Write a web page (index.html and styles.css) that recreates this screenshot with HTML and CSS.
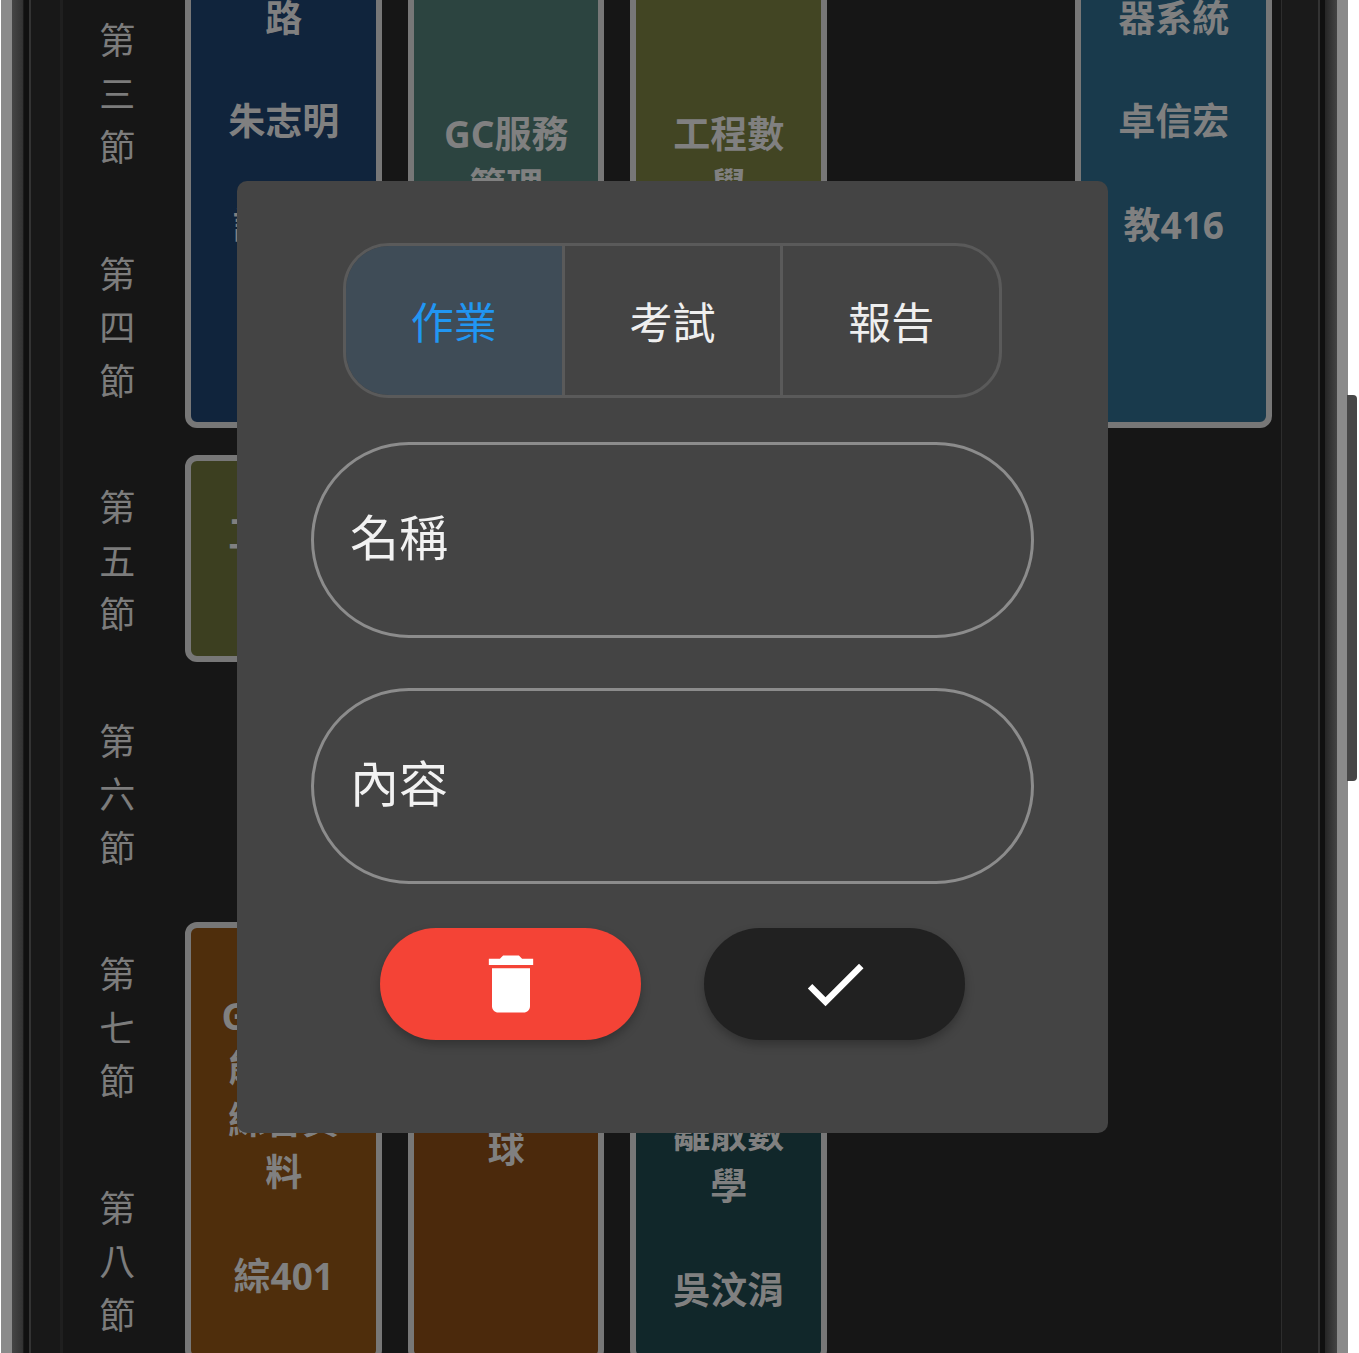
FILE: index.html
```html
<!DOCTYPE html>
<html lang="zh-Hant">
<head>
<meta charset="utf-8">
<title>課表</title>
<link rel="stylesheet" href="styles.css">
</head>
<body>
<div class="device">
  <div class="rim"></div>
  <div class="bezel bezel-left"></div>
  <div class="screen">
    <div class="gutter"></div>
    <div class="timetable">
      <div class="period p2"><span>第</span><span>二</span><span>節</span></div>
      <div class="period p3"><span>第</span><span>三</span><span>節</span></div>
      <div class="period p4"><span>第</span><span>四</span><span>節</span></div>
      <div class="period p5"><span>第</span><span>五</span><span>節</span></div>
      <div class="period p6"><span>第</span><span>六</span><span>節</span></div>
      <div class="period p7"><span>第</span><span>七</span><span>節</span></div>
      <div class="period p8"><span>第</span><span>八</span><span>節</span></div>

      <div class="card c1 span-top navy pad-top-two">
        <p>電腦網路</p><p>朱志明</p><p>誠301</p>
      </div>
      <div class="card c1 span-mid olive pad-mid">
        <p>工程數學</p><p>吳汶涓</p>
      </div>
      <div class="card c1 span-low amber pad-low-a">
        <p>GC服務能源與綜合資料</p><p>綜401</p>
      </div>
      <div class="card c2 span-top sage pad-top-low">
        <p>GC服務管理</p><p>朱志明</p><p>綜401</p>
      </div>
      <div class="card c2 span-low rust pad-low-b">
        <p>體育羽球</p>
      </div>
      <div class="card c3 span-top moss pad-top-low">
        <p>工程數學</p><p>吳汶涓</p><p>綜401</p>
      </div>
      <div class="card c3 span-low pine pad-low-c">
        <p>離散數學</p><p>吳汶涓</p>
      </div>
      <div class="card c5 span-top teal pad-top-two">
        <p>微處理器系統</p><p>卓信宏</p><p>教416</p>
      </div>
    </div>
    <div class="gutter-right"></div>
  </div>
  <div class="bezel bezel-right"></div>
  <div class="rim"></div>
  <div class="side-button"></div>
</div>

<div class="dialog">
  <div class="tabs">
    <div class="tab tab-active">作業</div>
    <div class="tab">考試</div>
    <div class="tab">報告</div>
  </div>
  <div class="field field-first"><span>名稱</span></div>
  <div class="field field-second"><span>內容</span></div>
  <div class="actions">
    <button class="action action-delete" type="button" aria-label="刪除">
      <svg class="icon" viewBox="0 0 24 24"><path d="M6 19c0 1.1.9 2 2 2h8c1.1 0 2-.9 2-2V7H6v12zM19 4h-3.5l-1-1h-5l-1 1H5v2h14V4z"/></svg>
    </button>
    <button class="action action-confirm" type="button" aria-label="確認">
      <svg class="icon" viewBox="0 0 24 24"><path d="M9 16.17L4.83 12l-1.41 1.41L9 19 21 7l-1.41-1.41z"/></svg>
    </button>
  </div>
</div>
</body>
</html>
```

FILE: styles.css
```css
* { box-sizing: border-box; }

html, body {
  margin: 0;
  height: 1353px;
  overflow: hidden;
  background: #fff;
}

body {
  font-family: "Noto Sans", "Noto Sans CJK TC", sans-serif;
  position: relative;
}

.device {
  display: flex;
  width: 1347px;
  height: 1353px;
  margin-left: 1px;
  position: relative;
}

.rim {
  width: 11px;
  flex: none;
  background: #8a8a8a;
}

.bezel { width: 19px; flex: none; }

.bezel-left {
  background: linear-gradient(90deg, #454545 0, #333 55%, #101010 63%, #101010 89%, #333 89%);
}

.bezel-right {
  width: 19px;
  background: linear-gradient(90deg, #333 0, #333 10%, #101010 10%, #101010 35%, #262626 38%, #444 100%);
}

.screen {
  flex: 1;
  min-width: 0;
  display: flex;
  background: #161616;
  overflow: hidden;
}

.gutter {
  width: 32px;
  flex: none;
  background: linear-gradient(90deg, #181818 0, #181818 29px, #1f1f1f 29px, #1f1f1f 32px);
}

.gutter-right {
  flex: 1;
  margin-left: -3px;
  position: relative;
  background: linear-gradient(90deg, #2d2d2d 0, #2d2d2d 1px, #1a1a1a 1px);
}

.timetable {
  flex: none;
  display: grid;
  grid-template-columns: 108.5px repeat(5, 222.5px);
  grid-template-rows: repeat(7, 233.5px);
  margin-top: -259px;
  height: 1634.5px;
}

.period {
  grid-column: 1;
  display: flex;
  flex-direction: column;
  align-items: center;
  justify-content: center;
  padding-top: 2px;
  color: #7c7c7c;
  font-family: "Noto Sans CJK TC", sans-serif;
  font-size: 36px;
  line-height: 53.5px;
}

.p2 { grid-row: 1; }
.p3 { grid-row: 2; }
.p4 { grid-row: 3; }
.p5 { grid-row: 4; }
.p6 { grid-row: 5; }
.p7 { grid-row: 6; }
.p8 { grid-row: 7; }

.card {
  margin: 13.5px 12.5px 13.5px 13.5px;
  padding-left: 25px;
  padding-right: 24px;
  border: 6px solid #777;
  border-radius: 12px;
  display: flex;
  flex-direction: column;
  gap: 51.5px;
  overflow: hidden;
  color: #808080;
  font-size: 37px;
  font-weight: 700;
  line-height: 52px;
  text-align: center;
}

.card p { margin: 0; }

.c1 { grid-column: 2; }
.c2 { grid-column: 3; }
.c3 { grid-column: 4; }
.c5 { grid-column: 6; }

.span-top { grid-row: 1 / span 3; }
.span-mid { grid-row: 4; }
.span-low { grid-row: 6 / span 2; }

.navy { background: #10243c; }
.olive { background: #3c3f20; }
.amber { background: #4f2e0c; }
.sage { background: #2c4440; }
.rust { background: #4b290c; }
.moss { background: #424523; }
.pine { background: #11272a; }
.teal { background: #193a4c; }

.pad-top-two { padding-top: 179px; }
.pad-top-low { padding-top: 347px; }
.pad-mid { padding-top: 47px; }
.pad-low-a { padding-top: 62px; }
.pad-low-b { padding-top: 143px; }
.pad-low-c { padding-top: 180px; }

.side-button {
  position: absolute;
  left: 1346px;
  top: 395px;
  width: 10px;
  height: 386px;
  border-radius: 0 4px 4px 0;
  background: #474747;
}

.dialog {
  position: absolute;
  left: 237px;
  top: 181px;
  width: 871px;
  height: 952px;
  padding-top: 62px;
  border-radius: 10px;
  background: #444;
  display: flex;
  flex-direction: column;
  align-items: center;
  font-family: "Noto Sans CJK TC", sans-serif;
}

.tabs {
  width: 659px;
  height: 155px;
  display: flex;
  border: 3px solid #5a5a5a;
  border-radius: 46px;
  overflow: hidden;
}

.tab {
  flex: 1;
  display: flex;
  align-items: center;
  justify-content: center;
  padding-bottom: 1px;
  color: #efefef;
  font-size: 43px;
  font-weight: 400;
}

.tab + .tab { border-left: 3px solid #5a5a5a; }

.tab-active {
  background: #3f4c57;
  color: #2196f3;
}

.field {
  width: 723px;
  height: 196px;
  display: flex;
  align-items: center;
  padding-left: 36px;
  padding-bottom: 12px;
  border: 3px solid #8c8c8c;
  border-radius: 98px;
  color: #f2f2f2;
  font-size: 49px;
  font-weight: 400;
}

.field-first { margin-top: 44px; }
.field-second { margin-top: 50px; }

.actions {
  display: flex;
  gap: 63px;
  margin-top: 44px;
}

.action {
  width: 261px;
  height: 112px;
  padding: 0;
  border: 0;
  border-radius: 56px;
  display: flex;
  align-items: center;
  justify-content: center;
  box-shadow: 0 5px 10px rgba(0, 0, 0, 0.25);
}

.action-delete { background: #f44336; }
.action-confirm { background: #212121; }

.icon {
  width: 76px;
  height: 76px;
  fill: #fff;
}
```
